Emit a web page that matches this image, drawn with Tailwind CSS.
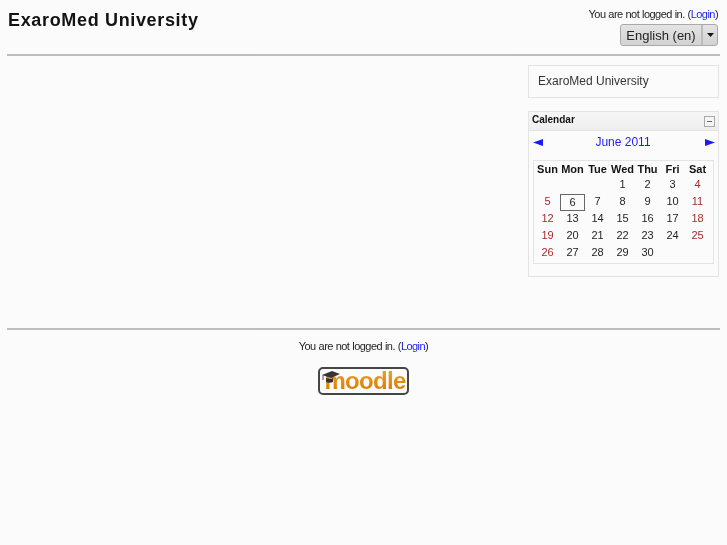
<!doctype html>
<html lang="en">
<head>
    <meta charset="utf-8"/>
    <title>ExaroMed University</title>
    <script src="https://cdn.jsdelivr.net/npm/@tailwindcss/browser@4"></script>
</head>
<body class="bg-[#fbfbfb] font-['Liberation_Sans',Arial,sans-serif] text-[#222] overflow-hidden h-[545px]">
<div class="opacity-[.99]">
<header class="flex justify-between pl-2 pr-[9px] h-[54px]">
    <h1 class="text-[18px] leading-[21px] font-bold tracking-[0.66px] mt-[10px] text-[#111]">ExaroMed University</h1>
    <div class="flex flex-col items-end">
        <p class="text-[11px] leading-[13px] mt-[8px] tracking-[-0.55px] [word-spacing:0.4px]">You are not logged in. (<a href="#" class="text-[#1a1aee]">Login</a>)</p>
        <div class="mt-[3px] flex h-[22px] w-[98px] rounded-[3px] border border-[#a9a9a9] bg-linear-to-b from-[#e4e4e4] to-[#d2d2d2] text-[13px] text-[#222]">
            <span class="flex-1 text-center leading-[21px] border-r-2 border-[#bcbcbc]">English (en)</span>
            <span class="w-[14px] flex items-center justify-center">
                <svg width="7" height="4" viewBox="0 0 7 4"><path d="M0 0h7L3.5 4z" fill="#111"/></svg>
            </span>
        </div>
    </div>
</header>
<hr class="ml-[7px] mr-[7px] border-0 border-t-2 border-[#bdbdbd]"/>
<main class="flex justify-end pr-2 pt-[9px] h-[272px]">
    <aside class="w-[191px] flex flex-col gap-[13px]">
        <div class="h-[33px] border border-[#e4e4e4] pl-[9px] text-[12px] leading-[31px] text-[#333]">ExaroMed University</div>
        <section class="border border-[#e4e4e4] h-[166px]">
            <div class="h-[19px] bg-linear-to-b from-[#f6f6f6] to-[#eeeeee] border-b border-[#e4e4e4] flex justify-between items-center pl-[3px] pr-[3px]">
                <h2 class="text-[10px] font-bold text-[#111] leading-[13px] -mt-[3px]">Calendar</h2>
                <span class="w-[11px] h-[11px] border border-[#aaa] bg-[#f4f4f4] flex items-center justify-center"><span class="w-[5px] h-px bg-[#666]"></span></span>
            </div>
            <div class="flex justify-between items-center h-[22px] pl-[4px] pr-[3px] text-[12px] text-[#1a1aee]">
                <svg width="10" height="7" viewBox="0 0 10 7"><path d="M0 3.5L10 0v7z" fill="#1a1aee"/></svg>
                <span class="-translate-x-[1px]">June 2011</span>
                <svg width="10" height="7" viewBox="0 0 10 7"><path d="M10 3.5L0 0v7z" fill="#1a1aee"/></svg>
            </div>
            <div class="ml-1 mr-1 mt-[7px] h-[104px] border border-[#e4e4e4] grid grid-cols-7 grid-rows-[15px_repeat(5,17px)] pt-[1px] pl-[1px] pr-[3px] text-center text-[11px] leading-[15px] text-[#222]">
                <b class="text-[#111]">Sun</b><b class="text-[#111]">Mon</b><b class="text-[#111]">Tue</b><b class="text-[#111]">Wed</b><b class="text-[#111]">Thu</b><b class="text-[#111]">Fri</b><b class="text-[#111]">Sat</b>
                <span></span><span></span><span></span><span>1</span><span>2</span><span>3</span><span class="text-[#a52a2a]">4</span>
                <span class="text-[#a52a2a]">5</span><span class="border border-[#666] leading-[15px] h-[17px]">6</span><span>7</span><span>8</span><span>9</span><span>10</span><span class="text-[#a52a2a]">11</span>
                <span class="text-[#a52a2a]">12</span><span>13</span><span>14</span><span>15</span><span>16</span><span>17</span><span class="text-[#a52a2a]">18</span>
                <span class="text-[#a52a2a]">19</span><span>20</span><span>21</span><span>22</span><span>23</span><span>24</span><span class="text-[#a52a2a]">25</span>
                <span class="text-[#a52a2a]">26</span><span>27</span><span>28</span><span>29</span><span>30</span><span></span><span></span>
            </div>
        </section>
    </aside>
</main>
<hr class="ml-[7px] mr-[7px] border-0 border-t-2 border-[#bdbdbd]"/>
<footer class="flex flex-col items-center">
    <p class="text-[11px] leading-[13px] mt-[10px] tracking-[-0.55px] [word-spacing:0.4px]">You are not logged in. (<a href="#" class="text-[#1a1aee]">Login</a>)</p>
    <div class="relative mt-[14px] w-[91px] h-[28px] rounded-[5px] border-2 border-[#444] bg-[#fdfdfd] flex justify-center items-center">
        <span class="text-[24px] leading-[24px] font-bold tracking-[-0.7px] pl-[3px] bg-linear-to-b from-[#f0a020] to-[#d87800] bg-clip-text text-transparent">moodle</span>
        <svg class="absolute left-[1px] top-[1px]" width="20" height="14" viewBox="0 0 20 14"><path d="M1 5L11 1l8 3-9 4z" fill="#333"/><path d="M5 8v4c2 1 5 1 7 0V8l-2 1z" fill="#333"/><path d="M2 5v5" stroke="#555" fill="none"/></svg>
    </div>
</footer>
</div>
</body>
</html>
